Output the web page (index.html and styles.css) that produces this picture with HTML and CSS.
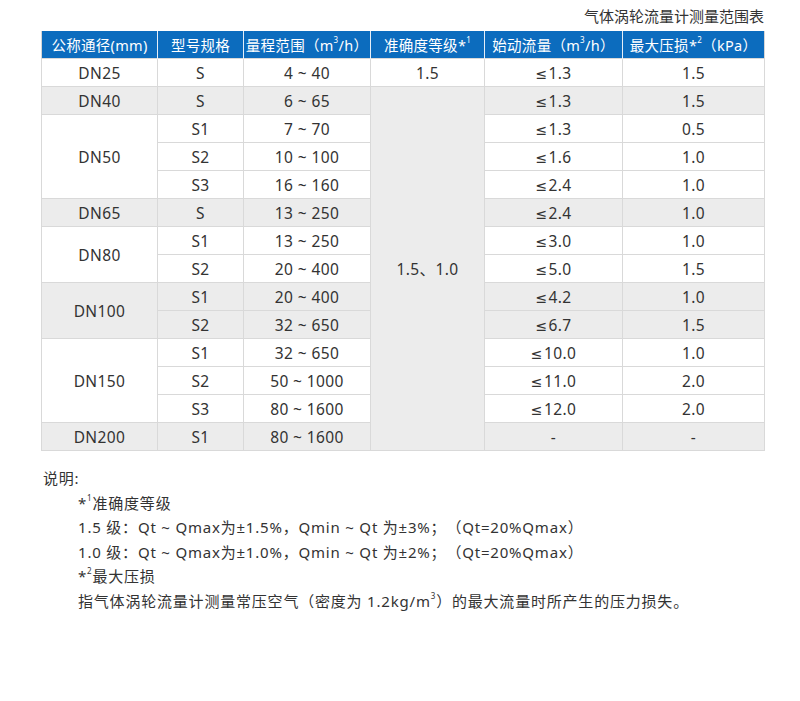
FILE: index.html
```html
<!DOCTYPE html>
<html lang="zh">
<head>
<meta charset="utf-8">
<link rel="stylesheet" href="styles.css">
</head>
<body>
<div class="page">
  <div class="title">气体涡轮流量计测量范围表</div>
  <table class="spec">
    <colgroup>
      <col class="c1"><col class="c2"><col class="c3"><col class="c4"><col class="c5"><col class="c6">
    </colgroup>
    <thead>
      <tr>
        <th>公称通径(mm)</th>
        <th>型号规格</th>
        <th>量程范围（m<sup>3</sup>/h）</th>
        <th>准确度等级*<sup>1</sup></th>
        <th>始动流量（m<sup>3</sup>/h）</th>
        <th>最大压损*<sup>2</sup>（kPa）</th>
      </tr>
    </thead>
    <tbody>
      <tr><td>DN25</td><td>S</td><td>4 ~ 40</td><td>1.5</td><td><span class="le">≤</span>1.3</td><td>1.5</td></tr>
      <tr class="g"><td>DN40</td><td>S</td><td>6 ~ 65</td><td rowspan="13" class="merged">1.5、1.0</td><td><span class="le">≤</span>1.3</td><td>1.5</td></tr>
      <tr><td rowspan="3">DN50</td><td>S1</td><td>7 ~ 70</td><td><span class="le">≤</span>1.3</td><td>0.5</td></tr>
      <tr><td>S2</td><td>10 ~ 100</td><td><span class="le">≤</span>1.6</td><td>1.0</td></tr>
      <tr><td>S3</td><td>16 ~ 160</td><td><span class="le">≤</span>2.4</td><td>1.0</td></tr>
      <tr class="g"><td>DN65</td><td>S</td><td>13 ~ 250</td><td><span class="le">≤</span>2.4</td><td>1.0</td></tr>
      <tr><td rowspan="2">DN80</td><td>S1</td><td>13 ~ 250</td><td><span class="le">≤</span>3.0</td><td>1.0</td></tr>
      <tr><td>S2</td><td>20 ~ 400</td><td><span class="le">≤</span>5.0</td><td>1.5</td></tr>
      <tr class="g"><td rowspan="2">DN100</td><td>S1</td><td>20 ~ 400</td><td><span class="le">≤</span>4.2</td><td>1.0</td></tr>
      <tr class="g"><td>S2</td><td>32 ~ 650</td><td><span class="le">≤</span>6.7</td><td>1.5</td></tr>
      <tr><td rowspan="3">DN150</td><td>S1</td><td>32 ~ 650</td><td><span class="le">≤</span>10.0</td><td>1.0</td></tr>
      <tr><td>S2</td><td>50 ~ 1000</td><td><span class="le">≤</span>11.0</td><td>2.0</td></tr>
      <tr><td>S3</td><td>80 ~ 1600</td><td><span class="le">≤</span>12.0</td><td>2.0</td></tr>
      <tr class="g"><td>DN200</td><td>S1</td><td>80 ~ 1600</td><td>-</td><td>-</td></tr>
    </tbody>
  </table>
  <div class="notes">
    <p class="head">说明:</p>
    <p class="ind">*<sup>1</sup>准确度等级</p>
    <p class="ind">1.5 级：Qt ~ Qmax为±1.5%，Qmin ~ Qt 为±3%；（Qt=20%Qmax）</p>
    <p class="ind">1.0 级：Qt ~ Qmax为±1.0%，Qmin ~ Qt 为±2%；（Qt=20%Qmax）</p>
    <p class="ind">*<sup>2</sup>最大压损</p>
    <p class="ind">指气体涡轮流量计测量常压空气（密度为 1.2kg/m<sup>3</sup>）的最大流量时所产生的压力损失。</p>
  </div>
</div>
</body>
</html>
```
FILE: styles.css
```css
html, body {
  margin: 0;
  padding: 0;
  background: #ffffff;
}
body {
  font-family: "Noto Sans", "Noto Sans CJK SC", sans-serif;
  color: #333333;
  text-spacing-trim: space-all;
}
.page {
  width: 723px;
  margin-left: 41px;
  padding-top: 5px;
}
.title {
  text-align: right;
  font-family: "Noto Sans CJK SC", sans-serif;
  font-size: 15px;
  line-height: 21px;
  height: 21px;
  margin-bottom: 5px;
  color: #333;
}
.spec {
  border-collapse: collapse;
  table-layout: fixed;
  width: 723px;
}
.c1 { width: 116px; }
.c2 { width: 86px; }
.c3 { width: 127px; }
.c4 { width: 114px; }
.c5 { width: 138px; }
.c6 { width: 142px; }
.spec th {
  background: #0c6cbe;
  color: #ffffff;
  font-weight: normal;
  font-size: 14.5px;
  height: 27px;
  padding: 0;
  text-align: center;
  border-left: 1px solid #e6eef7;
  border-right: 1px solid #e6eef7;
  white-space: nowrap;
  letter-spacing: 0.3px;
}
.spec th:first-child { border-left: 1px solid #d6d6d6; }
.spec th:last-child { border-right: 1px solid #d6d6d6; }
.spec sup {
  font-size: 8px;
  vertical-align: top;
  line-height: 1;
  position: relative;
  top: 2px;
}
.spec td {
  height: 27px;
  padding: 0;
  text-align: center;
  font-size: 15.5px;
  border: 1px solid #d9d9d9;
  background: #ffffff;
  color: #333;
  letter-spacing: 0.4px;
}
.le {
  font-family: "DejaVu Sans", sans-serif;
  font-size: 14px;
  margin-right: 1px;
}
.spec tr.g td { background: #ececec; }
.spec td.merged { background: #ececec; }
.notes {
  margin-top: 15px;
  font-size: 15px;
  line-height: 24.5px;
  letter-spacing: 0.8px;
  color: #333;
}
.notes p { margin: 0; }
.notes .head { padding-left: 2px; }
.notes .ind { padding-left: 37px; }
.notes sup {
  font-size: 8px;
  vertical-align: top;
  line-height: 1;
  position: relative;
  top: 3px;
}
```
